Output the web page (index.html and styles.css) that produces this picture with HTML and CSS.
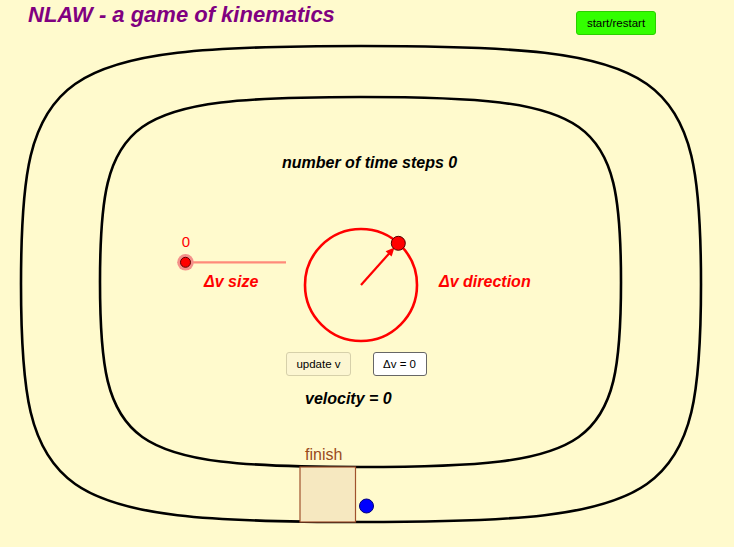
FILE: index.html
```html
<!DOCTYPE html>
<html lang="en">
<head>
<meta charset="utf-8">
<title>NLAW - a game of kinematics</title>
<link rel="stylesheet" href="styles.css">
</head>
<body>
<div class="stage">
  <svg class="board" width="734" height="547" viewBox="0 0 734 547" xmlns="http://www.w3.org/2000/svg">
    <!-- race track: outer and inner boundary -->
    <path class="track" d="M 361 46 C 670 46, 701 68, 701 284 C 701 500, 670 522, 361 522 C 52 522, 21 500, 21 284 C 21 68, 52 46, 361 46 Z"/>
    <path class="track" d="M 360.5 97 C 595 97, 621 115.5, 621 282 C 621 448.5, 595 467, 360.5 467 C 126 467, 100 448.5, 100 282 C 100 115.5, 126 97, 360.5 97 Z"/>

    <!-- finish zone -->
    <rect class="finish-box" x="300" y="467" width="55.5" height="55"/>
    <text class="finish-label" x="305" y="460">finish</text>

    <!-- car -->
    <circle class="car" cx="366.5" cy="506" r="7"/>

    <text class="title" x="28" y="21.5">NLAW - a game of kinematics</text>
    <text class="info" x="282" y="168">number of time steps 0</text>

    <!-- Δv size slider -->
    <text class="slider-value" x="186" y="247" text-anchor="middle">0</text>
    <line class="slider-line" x1="186" y1="262.3" x2="286" y2="262.3"/>
    <circle class="slider-halo" cx="185.5" cy="262.3" r="8.3"/>
    <circle class="slider-knob" cx="185.5" cy="262.3" r="5"/>
    <text class="red-label" x="204" y="287">Δv size</text>

    <!-- Δv direction dial -->
    <circle class="dial" cx="361" cy="285" r="56"/>
    <line class="dial-arrow" x1="361" y1="285" x2="390" y2="252.5"/>
    <polygon class="dial-head" points="394.5,247.5 391.6,256.6 385.6,251.3"/>
    <circle class="dial-knob" cx="398.3" cy="243.3" r="7"/>
    <text class="red-label" x="439" y="287">Δv direction</text>

    <text class="info" x="305" y="404">velocity = 0</text>
  </svg>

  <button class="btn btn-start">start/restart</button>
  <button class="btn btn-update">update v</button>
  <button class="btn btn-reset">Δv = 0</button>
</div>
</body>
</html>
```

FILE: styles.css
```css
html, body {
  margin: 0;
  padding: 0;
  background: #ffffff;
}

.stage {
  position: relative;
  width: 734px;
  height: 547px;
  background: #fffacd;
  overflow: hidden;
  font-family: "Liberation Sans", Arial, sans-serif;
}

.board {
  display: block;
}

.track {
  fill: none;
  stroke: #000000;
  stroke-width: 2.6;
}

.finish-box {
  fill: #f6e8c0;
  stroke: #a0522d;
  stroke-width: 1.2;
}

.finish-label {
  font-size: 16px;
  fill: #9a4a1c;
}

.car {
  fill: #0000ff;
  stroke: #00007a;
  stroke-width: 1;
}

.title {
  font-size: 22px;
  font-weight: bold;
  font-style: italic;
  fill: #800080;
}

.info {
  font-size: 16px;
  font-weight: bold;
  font-style: italic;
  fill: #000000;
}

.red-label {
  font-size: 16px;
  font-weight: bold;
  font-style: italic;
  fill: #ff0000;
}

.slider-value {
  font-size: 15px;
  fill: #ff0000;
}

.slider-line {
  stroke: #ff8a7a;
  stroke-width: 2.2;
}

.slider-halo {
  fill: #f4908a;
}

.slider-knob {
  fill: #ff0000;
  stroke: #600000;
  stroke-width: 1;
}

.dial {
  fill: none;
  stroke: #ff0000;
  stroke-width: 2.6;
}

.dial-arrow {
  stroke: #ff0000;
  stroke-width: 2.2;
}

.dial-head {
  fill: #ff0000;
}

.dial-knob {
  fill: #ff0000;
  stroke: #500000;
  stroke-width: 1;
}

/* applet buttons */
.btn {
  position: absolute;
  box-sizing: border-box;
  height: 23.5px;
  padding: 0;
  font-family: "Liberation Sans", Arial, sans-serif;
  font-size: 11.5px;
  color: #000000;
  border-radius: 3px;
  cursor: pointer;
}

.btn-start {
  left: 576px;
  top: 11px;
  width: 80px;
  background: #33ff00;
  border: 1.5px solid #2bcf00;
}

.btn-update {
  left: 286px;
  top: 352px;
  width: 65px;
  background: #fcf6d2;
  border: 1.5px solid #d6d0aa;
}

.btn-reset {
  left: 372.5px;
  top: 352px;
  width: 54px;
  background: #ffffff;
  border: 1.5px solid #666666;
}
```
